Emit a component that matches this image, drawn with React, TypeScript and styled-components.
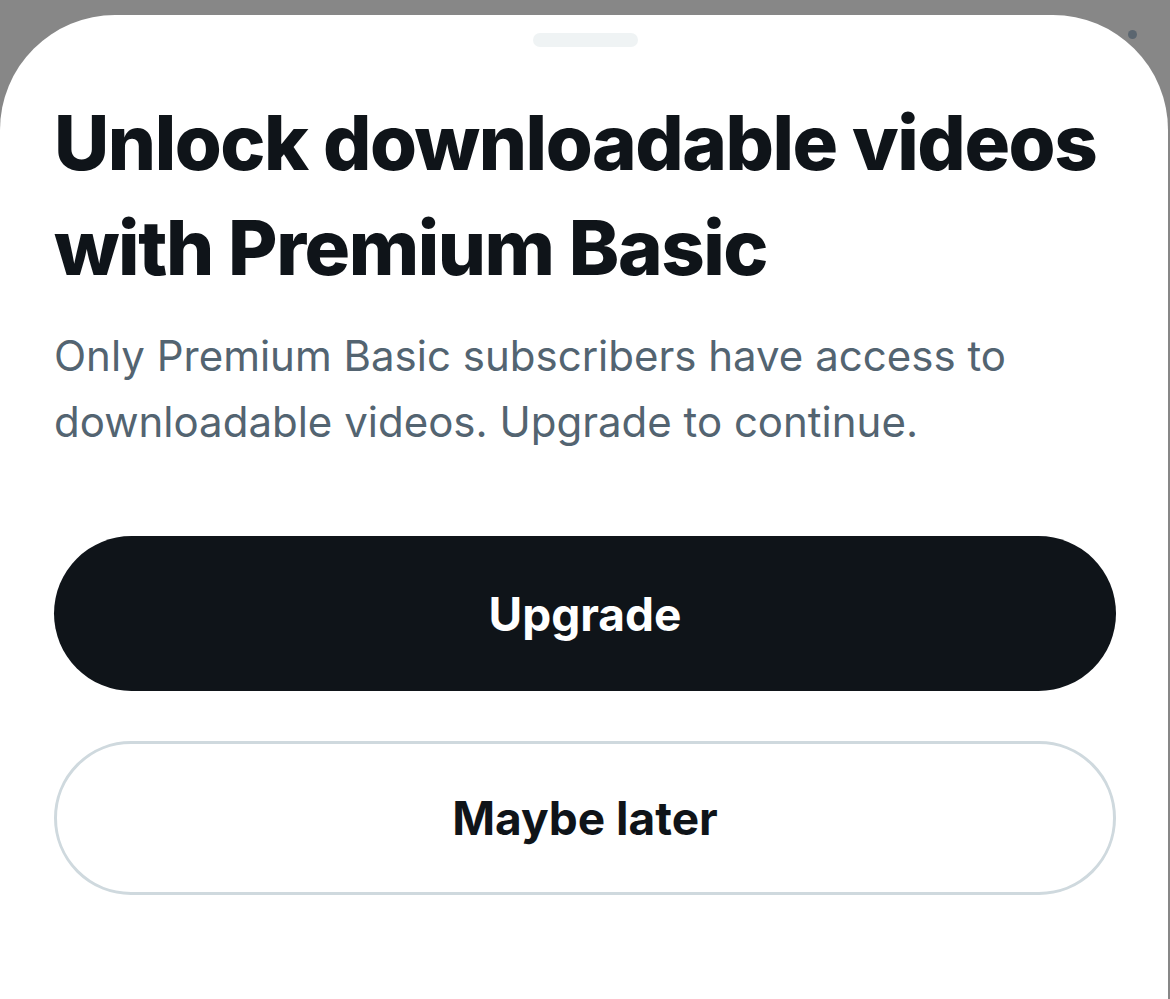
import styled, { createGlobalStyle } from "styled-components";

const GlobalStyle = createGlobalStyle`
  html, body {
    margin: 0;
    padding: 0;
    background: #878787;
  }
  body {
    font-family: Inter, "Liberation Sans", Arial, sans-serif;
    -webkit-font-smoothing: antialiased;
  }
`;

export default function App() {
  return (
    <>
      <GlobalStyle />
      <Backdrop>
        <BehindDot />
        <Sheet>
          <Handle />
          <Title>
            Unlock downloadable videos
            <br />
            with Premium Basic
          </Title>
          <Subtitle>
            Only Premium Basic subscribers have access to
            <br />
            downloadable videos. Upgrade to continue.
          </Subtitle>
          <Actions>
            <PillButton variant="primary">Upgrade</PillButton>
            <PillButton variant="outline">Maybe later</PillButton>
          </Actions>
        </Sheet>
      </Backdrop>
    </>
  );
}

const Backdrop = styled.div`
  position: relative;
  min-height: 100vh;
  padding-top: 15px;
  box-sizing: border-box;
  overflow: hidden;
`;

const BehindDot = styled.div`
  position: absolute;
  top: 30px;
  left: 1128px;
  width: 9px;
  height: 9px;
  border-radius: 50%;
  background: #5b6670;
`;

const Sheet = styled.div`
  position: relative;
  background: #ffffff;
  border-radius: 115px 115px 0 0;
  min-height: calc(100vh - 15px);
  margin-right: 2px;
  padding: 18px 52px 0 54px;
  box-sizing: border-box;
  display: flex;
  flex-direction: column;
`;

const Handle = styled.div`
  align-self: center;
  width: 105px;
  height: 14px;
  border-radius: 7px;
  background: #eff3f4;
`;

const Title = styled.h1`
  margin: 43px 0 0 0;
  font-size: 76px;
  line-height: 105px;
  font-weight: 800;
  letter-spacing: -1.45px;
  color: #0f1419;
`;

const Subtitle = styled.p`
  margin: 23px 0 0 0;
  font-size: 42px;
  line-height: 66px;
  font-weight: 400;
  color: #536471;
`;

const Actions = styled.div`
  display: flex;
  flex-direction: column;
  gap: 50px;
  margin-top: 81px;
`;

const PillButton = styled.button<{ variant: "primary" | "outline" }>`
  height: ${(p) => (p.variant === "primary" ? "155px" : "154px")};
  width: 100%;
  border-radius: 80px;
  font-family: Inter, "Liberation Sans", Arial, sans-serif;
  font-size: 46px;
  font-weight: 700;
  padding: 0;
  box-sizing: border-box;
  cursor: pointer;
  background: ${(p) => (p.variant === "primary" ? "#0f1419" : "#ffffff")};
  color: ${(p) => (p.variant === "primary" ? "#ffffff" : "#0f1419")};
  border: ${(p) => (p.variant === "primary" ? "none" : "3px solid #cfd9de")};
`;
